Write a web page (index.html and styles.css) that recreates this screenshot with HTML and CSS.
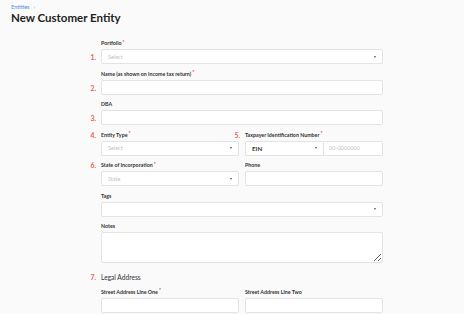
FILE: index.html
```html
<!DOCTYPE html>
<html>
<head>
<meta charset="utf-8">
<link rel="stylesheet" href="styles.css">
</head>
<body>
<header class="page-head">
  <nav class="crumbs"><a class="crumb-link">Entities</a><span class="crumb-sep">›</span></nav>
  <h1 class="title">New Customer Entity</h1>
</header>
<form class="form">
  <div class="field">
    <span class="num num-input">1.</span>
    <label class="label">Portfolio<span class="req">*</span></label>
    <div class="control select"><span class="ph">Select</span><span class="caret"></span></div>
  </div>
  <div class="field">
    <span class="num num-input">2.</span>
    <label class="label">Name (as shown on income tax return)<span class="req">*</span></label>
    <div class="control"></div>
  </div>
  <div class="field">
    <span class="num num-input">3.</span>
    <label class="label">DBA</label>
    <div class="control"></div>
  </div>
  <div class="row">
    <div class="field">
      <span class="num num-label">4.</span>
      <label class="label">Entity Type<span class="req">*</span></label>
      <div class="control select"><span class="ph">Select</span><span class="caret"></span></div>
    </div>
    <div class="field">
      <span class="num num-label">5.</span>
      <label class="label">Taxpayer Identification Number<span class="req">*</span></label>
      <div class="combo">
        <div class="control select combo-sel"><span class="val">EIN</span><span class="caret"></span></div>
        <div class="control combo-in"><span class="ph">00-0000000</span></div>
      </div>
    </div>
  </div>
  <div class="row">
    <div class="field">
      <span class="num num-label">6.</span>
      <label class="label">State of Incorporation<span class="req">*</span></label>
      <div class="control select"><span class="ph">State</span><span class="caret"></span></div>
    </div>
    <div class="field">
      <label class="label">Phone</label>
      <div class="control"></div>
    </div>
  </div>
  <div class="field">
    <label class="label">Tags</label>
    <div class="control select"><span class="ph"></span><span class="caret"></span></div>
  </div>
  <div class="field">
    <label class="label">Notes</label>
    <textarea class="notes"></textarea>
  </div>
  <div class="section">
    <span class="num num-label">7.</span>
    <h2 class="section-title">Legal Address</h2>
  </div>
  <div class="row">
    <div class="field">
      <label class="label">Street Address Line One<span class="req">*</span></label>
      <div class="control"></div>
    </div>
    <div class="field">
      <label class="label">Street Address Line Two</label>
      <div class="control"></div>
    </div>
  </div>
</form>
</body>
</html>
```
FILE: styles.css
```css
* { box-sizing: border-box; }
html, body { margin: 0; padding: 0; }
body {
  background: #fafafa;
  font-family: Lato, "Open Sans", sans-serif;
  color: #2b2b2b;
  width: 464px;
  height: 314px;
  overflow: hidden;
}
.page-head { padding: 3px 11px 0; }
.crumbs { font-size: 5.6px; line-height: 8px; display: flex; gap: 4px; }
.crumb-link { color: #4a8fd8; }
.crumb-sep { color: #a8a8a8; }
.title {
  margin: 0;
  font-size: 11.5px;
  line-height: 14px;
  font-weight: 700;
  color: #222;
}
.form {
  margin: 14px 0 0 101px;
  width: 282px;
  display: flex;
  flex-direction: column;
  gap: 5.5px;
}
.row { display: grid; grid-template-columns: 1fr 1fr; gap: 6px; }
.field { position: relative; display: flex; flex-direction: column; gap: 2px; }
.label {
  display: block;
  height: 8px;
  font-size: 5.3px;
  line-height: 8px;
  font-weight: 700;
  color: #333;
  white-space: nowrap;
}
.req {
  color: #e2483a;
  font-size: 5px;
  line-height: 0;
  position: relative;
  top: -1.5px;
  margin-left: 1px;
}
.control {
  height: 15px;
  background: #fff;
  border: 1px solid #e3e3e3;
  border-radius: 2px;
  display: flex;
  align-items: center;
  padding: 0 6px;
  font-size: 5.5px;
}
.select { justify-content: space-between; }
.ph { color: #c3c3c3; }
.val { color: #333; font-size: 6.2px; font-weight: 700; }
.caret {
  width: 0; height: 0;
  border-left: 1.5px solid transparent;
  border-right: 1.5px solid transparent;
  border-top: 2px solid #555;
}
.combo { display: flex; }
.combo-sel { width: 79px; border-radius: 2px 0 0 2px; }
.combo-in { flex: 1; border-left: none; border-radius: 0 2px 2px 0; padding-left: 5px; }
.notes {
  height: 31px;
  background: #fff;
  border: 1px solid #e3e3e3;
  border-radius: 2px;
  resize: vertical;
  display: block;
  width: 100%;
  margin: 0;
  font: inherit;
}
.section { position: relative; margin-top: 3.5px; }
.section-title {
  margin: 0;
  font-size: 6.6px;
  line-height: 10px;
  font-weight: 400;
  color: #333;
}
.num {
  position: absolute;
  right: calc(100% + 5px);
  font-size: 6.8px;
  line-height: 8px;
  font-weight: 700;
  color: #e8604a;
}
.num-input { top: 14px; }
.num-label { top: 0; }
.section .num { top: 1px; }
```
